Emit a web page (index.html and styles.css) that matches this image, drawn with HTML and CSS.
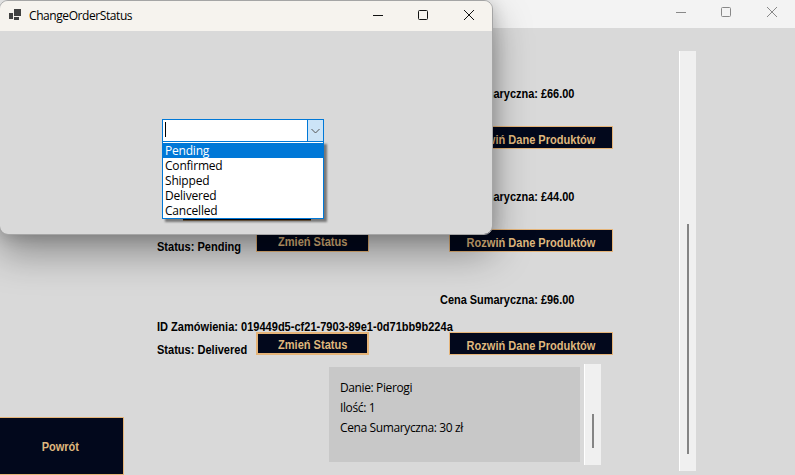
FILE: index.html
```
<!DOCTYPE html>
<html lang="pl">
<head>
<meta charset="utf-8">
<title>ChangeOrderStatus</title>
<link rel="stylesheet" href="styles.css">
</head>
<body>
<div class="window">
  <header class="window-bar">
    <svg class="controls" width="102" height="12" viewBox="0 0 102 12"><path d="M0 6.5h10M45.5 2.5q0-1 1-1h7q1 0 1 1v7q0 1-1 1h-7q-1 0-1-1zM91 1l10 10M101 1L91 11"/></svg>
  </header>
  <main class="content">
    <aside class="side"><button class="btn back"><span>Powrót</span></button></aside>
    <section class="orders">
      <article class="order">
        <div class="price"><span>Cena Sumaryczna: £66.00</span></div>
        <div class="order-id"></div>
        <div class="row"><span class="status"></span><button class="btn change"></button><button class="btn expand"><span>Rozwiń Dane Produktów</span></button></div>
      </article>
      <article class="order">
        <div class="price"><span>Cena Sumaryczna: £44.00</span></div>
        <div class="order-id"></div>
        <div class="row"><span class="status"><span>Status: Pending</span></span><button class="btn change"><span>Zmień Status</span></button><button class="btn expand"><span>Rozwiń Dane Produktów</span></button></div>
      </article>
      <article class="order">
        <div class="price"><span>Cena Sumaryczna: £96.00</span></div>
        <div class="order-id"><span>ID Zamówienia: 019449d5-cf21-7903-89e1-0d71bb9b224a</span></div>
        <div class="row"><span class="status"><span>Status: Delivered</span></span><button class="btn change focused"><span>Zmień Status</span></button><button class="btn expand"><span>Rozwiń Dane Produktów</span></button></div>
        <div class="details">
          <div class="product"><p>Danie: Pierogi</p><p>Ilość: 1</p><p>Cena Sumaryczna: 30 zł</p></div>
          <div class="scroll small"><i></i></div>
        </div>
      </article>
    </section>
    <div class="scroll main-scroll"><i></i></div>
  </main>
</div>
<div class="dialog">
  <header class="dialog-bar">
    <svg class="app-icon" width="13" height="12" viewBox="0 0 13 12"><path d="M5 0h7v7H5zM0 4h4v6H0zM5 8h5v3H5z"/></svg>
    <span class="dialog-title">ChangeOrderStatus</span>
    <svg class="controls" width="102" height="12" viewBox="0 0 102 12"><path d="M0 6.5h10M45.5 2.5q0-1 1-1h7q1 0 1 1v7q0 1-1 1h-7q-1 0-1-1zM91 1l10 10M101 1L91 11"/></svg>
  </header>
  <div class="dialog-body">
    <div class="combo">
      <div class="field"><span class="caret"></span><span class="arrow"><svg width="9" height="6" viewBox="0 0 9 6"><path d="M.5 1l4 4 4-4"/></svg></span></div>
      <ul class="options"><li class="selected">Pending</li><li>Confirmed</li><li>Shipped</li><li>Delivered</li><li>Cancelled</li></ul>
    </div>
    <div class="confirm-edge"></div>
  </div>
</div>
</body>
</html>
```
FILE: styles.css
```
* { box-sizing: border-box; }
body {
  margin: 0;
  width: 795px;
  height: 475px;
  overflow: hidden;
  background: #d9d9d9;
  color: #000;
  font: bold 12px/18px "Liberation Sans", Arial, sans-serif;
}
.window { height: 475px; display: flex; flex-direction: column; }
.window-bar {
  height: 28px;
  flex: none;
  display: flex;
  justify-content: flex-end;
  padding: 6px 17px 0 0;
  background: #f3f3f3;
}
.controls { fill: none; stroke: #888; stroke-width: 1; }
.content { flex: 1; display: flex; min-height: 0; }
.side { width: 124px; display: flex; align-items: flex-end; }
.btn {
  font: inherit;
  margin: 0;
  padding: 0;
  color: #dfb77d;
  background: #02081c;
  border: 1px solid #e5b478;
  white-space: nowrap;
  text-align: center;
}
/* Condensed bold labels */
.btn span, .price span, .order-id span, .status span {
  display: inline-block;
  transform: scaleX(.92);
}
.price span { transform: scaleX(.912); transform-origin: right; }
.order-id span, .status span { transform-origin: left; }
.back { width: 124px; height: 58px; border-left: 0; padding: 1px 2px 0 0; }
.orders {
  width: 456px;
  margin-left: 33px;
  padding-top: 57px;
  display: flex;
  flex-direction: column;
  gap: 39px;
}
.price { height: 18px; width: 417px; text-align: right; }
.order-id { height: 10px; line-height: 10px; margin-top: 13px; white-space: nowrap; }
.row { display: flex; height: 23px; }
.status { width: 99px; padding-top: 9px; line-height: 18px; white-space: nowrap; }
.change { width: 113px; height: 23px; padding-top: 3px; }
.change.focused { border-width: 2px; padding-top: 2px; }
.expand { width: 164px; height: 23px; margin-left: 80px; padding-top: 4px; }
.details { display: flex; align-items: flex-start; margin: 9px 0 0 172px; gap: 4px; }
.product {
  width: 251px;
  height: 95px;
  margin-top: 3px;
  padding: 11px;
  background: #c8c8c8;
  font: 12px/20px "Open Sans", "Noto Sans", sans-serif;
  letter-spacing: -0.38px;
}
.product p { margin: 0; }
.scroll { width: 17px; background: #f0f0f0; border-left: 1px solid #fff; }
.scroll i { display: block; width: 2px; margin-left: 7px; background: #858585; }
.small { height: 101px; padding-top: 50px; }
.small i { height: 34px; }
.main-scroll { height: 420px; margin: 23px 0 0 66px; padding-top: 173px; }
.main-scroll i { height: 230px; }
.dialog {
  position: absolute;
  top: 0;
  left: -1px;
  width: 494px;
  height: 235px;
  border: 1px solid #a5a5a5;
  border-radius: 9px;
  overflow: hidden;
  background: #d9d9d9;
  background-clip: padding-box;
  box-shadow: 0 18px 38px rgba(0, 0, 0, .36), 0 2px 16px rgba(0, 0, 0, .18);
}
.dialog-bar {
  height: 30px;
  display: flex;
  align-items: flex-start;
  padding: 8px 17px 0 9px;
  background: #f6f3ee;
}
.dialog-title {
  margin: -2px auto 0 7px;
  font: 12px/18px "Open Sans", "Noto Sans", sans-serif;
  letter-spacing: -0.42px;
}
.dialog .controls { stroke: #111; }
.app-icon { fill: #404040; }
.dialog-body { height: 203px; padding: 88px 0 0 162px; }
.combo { width: 162px; }
.field {
  height: 23px;
  display: flex;
  justify-content: space-between;
  background: #fff;
  border: 1px solid #0078d7;
}
.caret { width: 1px; height: 15px; margin: 2px 0 0 2px; background: #000; }
.arrow {
  width: 16px;
  display: flex;
  align-items: center;
  justify-content: center;
  background: #cce4f7;
  border-left: 1px solid #0078d7;
}
.arrow svg { fill: none; stroke: #555; }
.options {
  list-style: none;
  margin: -1px 0 0;
  padding: 1px 0 0;
  height: 78px;
  background: #fff;
  border: 1px solid #0078d7;
  box-shadow: 3px 3px 2px rgba(0, 0, 0, .45);
  font: 12px/16px "Open Sans", "Noto Sans", sans-serif;
  letter-spacing: -0.2px;
  position: relative;
}
.options li { height: 15px; padding-left: 2px; }
.options .selected { background: #0078d7; color: #fff; }
.confirm-edge { width: 128px; height: 2px; margin-left: 21px; background: #02081c; border-bottom: 1px solid #a88963; }
```
